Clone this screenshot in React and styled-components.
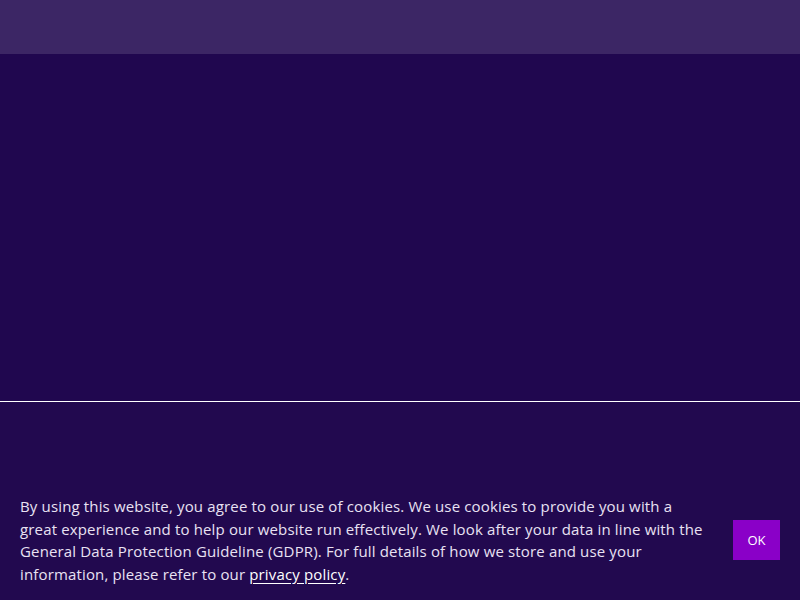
import React from "react";
import styled, { createGlobalStyle } from "styled-components";

const GlobalStyle = createGlobalStyle`
  html, body {
    margin: 0;
    padding: 0;
    background: #20074f;
  }
  body {
    font-family: "Open Sans", "Liberation Sans", sans-serif;
  }
`;

const Page = styled.div`
  width: 800px;
  height: 600px;
  display: flex;
  flex-direction: column;
  overflow: hidden;
`;

const Header = styled.header`
  height: 54px;
  flex-shrink: 0;
  background: #3c2665;
`;

const Hero = styled.main`
  height: 347px;
  flex-shrink: 0;
  background: #20074f;
  border-bottom: 1px solid #ffffff;
`;

const Footer = styled.footer`
  flex: 1;
  background: #22094f;
  display: flex;
  align-items: flex-end;
`;

const CookieBar = styled.div`
  width: 100%;
  display: flex;
  align-items: center;
  justify-content: space-between;
  padding: 0 20px 15px 20px;
  box-sizing: border-box;
`;

const CookieText = styled.p`
  margin: 0;
  width: 700px;
  font-size: 15px;
  line-height: 22.5px;
  color: #e9e2f3;
  letter-spacing: 0.15px;
  white-space: nowrap;
`;

const PolicyLink = styled.a`
  color: #ffffff;
  text-decoration: underline;
  text-underline-offset: 3px;
`;

const OkButton = styled.button`
  width: 47px;
  height: 40px;
  flex-shrink: 0;
  border: none;
  background: #8a00c8;
  color: #ffffff;
  font-family: "Open Sans", "Liberation Sans", sans-serif;
  font-size: 13px;
  font-weight: 500;
  padding: 0;
  cursor: pointer;
`;

export default function App() {
  return (
    <Page>
      <GlobalStyle />
      <Header />
      <Hero />
      <Footer>
        <CookieBar>
          <CookieText>
            By using this website, you agree to our use of cookies. We use
            cookies to provide you with a
            <br />
            great experience and to help our website run effectively. We look
            after your data in line with the
            <br />
            General Data Protection Guideline (GDPR). For full details of how
            we store and use your
            <br />
            information, please refer to our{" "}
            <PolicyLink href="#">privacy policy</PolicyLink>.
          </CookieText>
          <OkButton>OK</OkButton>
        </CookieBar>
      </Footer>
    </Page>
  );
}
